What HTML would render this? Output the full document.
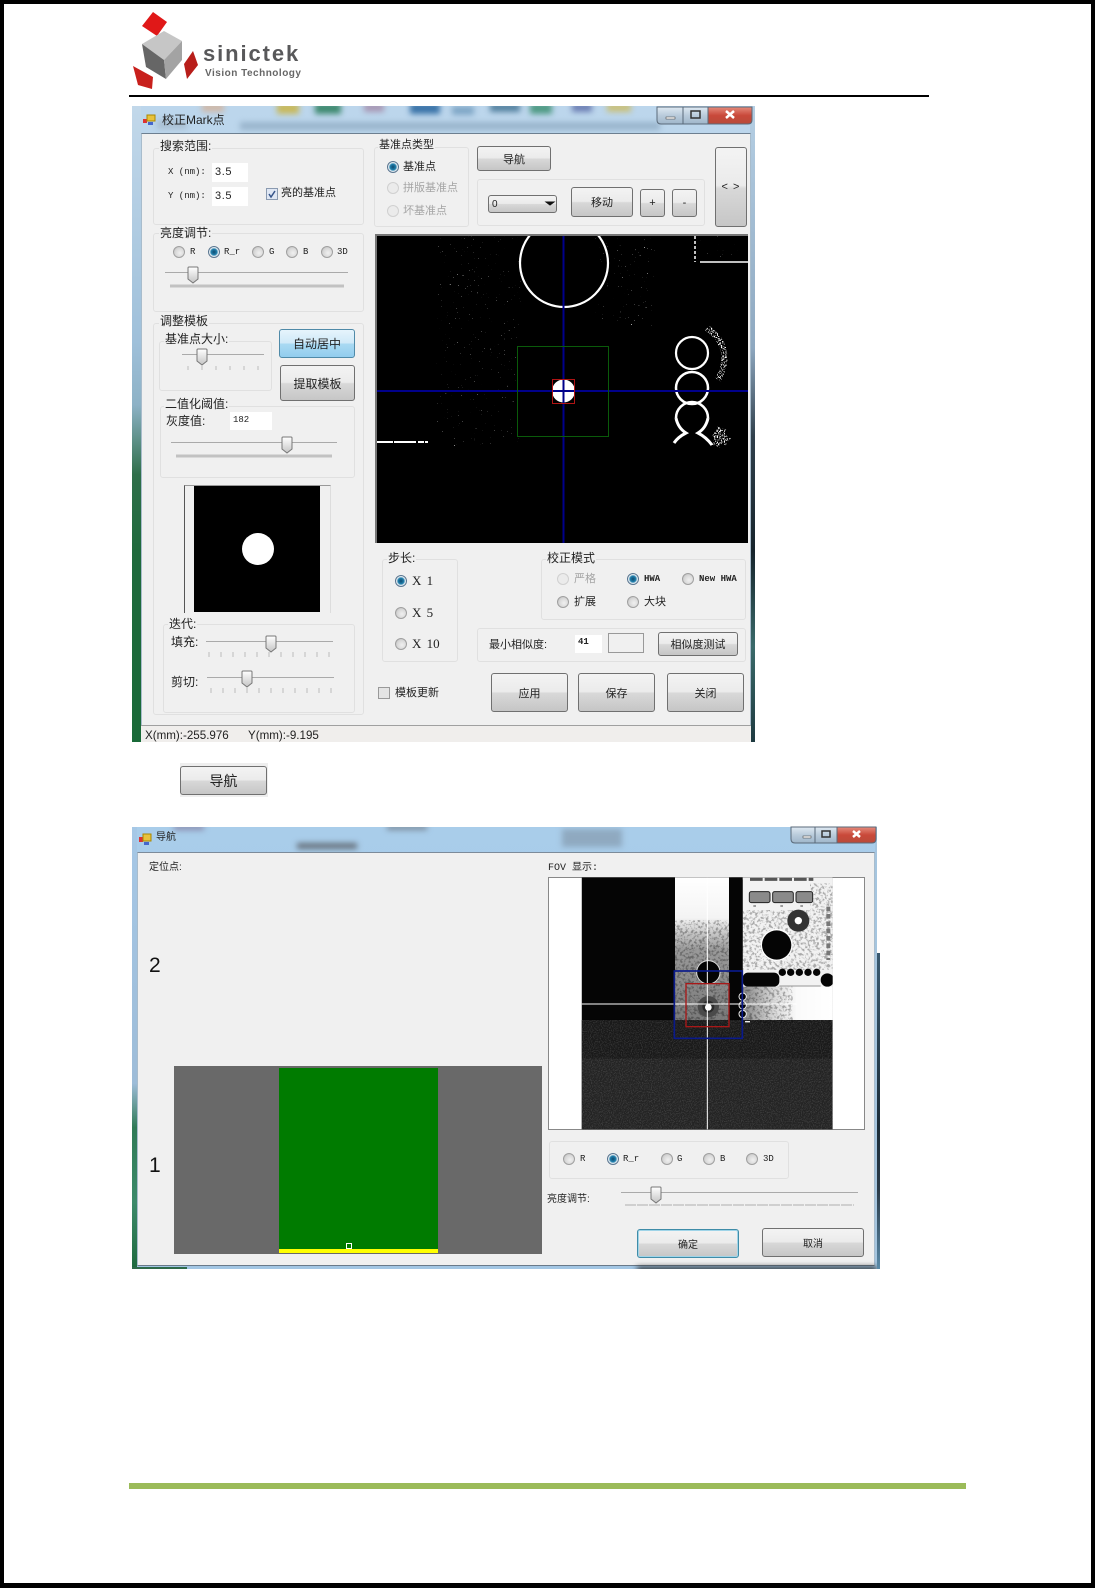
<!DOCTYPE html>
<html lang="zh"><head><meta charset="utf-8"><title>校正Mark点</title>
<style>
html,body{margin:0;padding:0;background:#fff}
#p{position:relative;width:1095px;height:1588px;overflow:hidden;background:#fff;font-family:"Liberation Sans","WenQuanYi Zen Hei","Noto Sans CJK SC",sans-serif;color:#222}
#p div,#p span{position:absolute;box-sizing:border-box}
.g{border:1px solid #e0e0e0;border-radius:3px}
.t{font-size:11px;line-height:14px;white-space:nowrap;color:#222}
.l{font-size:12px;line-height:14px;white-space:nowrap;background:#f0f0f0;padding:0 1px;color:#222}
.m{font-family:"Liberation Mono","WenQuanYi Zen Hei",monospace;font-size:9px;line-height:12px;white-space:nowrap}
.d{color:#a5a5a5}
.b{border:1px solid #707070;border-radius:3px;background:linear-gradient(#f3f3f3 0,#ebebeb 48%,#d8d8d8 52%,#c6c6c6 100%);display:flex;align-items:center;justify-content:center;font-size:11px;color:#222;white-space:nowrap}
.i{background:#fff;font-size:11px;line-height:19px;padding-left:3px;letter-spacing:.6px}
.r{width:12px;height:12px;border-radius:50%;border:1px solid #a0a0a0;background:radial-gradient(circle at 60% 60%,#f0f0f0 0,#d8d8d8 55%,#b4b4b4 100%)}
.c{border-color:#5a7690;background:radial-gradient(circle,#0e4a70 0,#2180ad 42%,#eaf0f5 62%,#d2dce6 100%)}
.x{border-color:#d0d0d0;background:#ebebeb}
.blur{filter:blur(3px)}
</style></head><body><div id="p">

<!-- window 1 frame -->
<div style="left:132px;top:106px;width:623px;height:636px;background:linear-gradient(#bcd6ec,#b5d0e6);overflow:hidden">
  <div style="left:0;top:0;width:9px;height:636px;background:linear-gradient(#c2d8ea 0,#9fc0da 37%,#8db2c6 47%,#2f6f4a 58%,#1f6a3c 70%,#196a38 100%)"></div>
  <div style="right:0;top:0;width:5px;height:636px;background:linear-gradient(#b5cfe4 0,#8ea8c0 38%,#30404c 52%,#16242c 70%,#3a6a6a 85%,#1e3a40 100%)"></div>
  <div class="blur" style="left:25px;top:14px;width:30px;height:9px;background:#a9bfd2"></div>
  <div class="blur" style="left:70px;top:-3px;width:22px;height:9px;background:#cfb8a8"></div>
  <div class="blur" style="left:145px;top:-3px;width:22px;height:11px;background:#c8b95c"></div>
  <div class="blur" style="left:183px;top:-3px;width:26px;height:11px;background:#3f8a70"></div>
  <div class="blur" style="left:232px;top:-3px;width:20px;height:9px;background:#a897b4"></div>
  <div class="blur" style="left:278px;top:-3px;width:30px;height:11px;background:#3a73a8"></div>
  <div class="blur" style="left:320px;top:0;width:22px;height:9px;background:#7fa6c6"></div>
  <div class="blur" style="left:358px;top:-3px;width:30px;height:9px;background:#5582a0"></div>
  <div class="blur" style="left:398px;top:-3px;width:22px;height:11px;background:#4f9a84"></div>
  <div class="blur" style="left:440px;top:-3px;width:20px;height:9px;background:#6d7fb4"></div>
  <div class="blur" style="left:475px;top:-3px;width:24px;height:9px;background:#c9c07a"></div>
  <div class="blur" style="left:108px;top:16px;width:420px;height:8px;background:#8ba7bf;opacity:.7"></div>
  <div style="left:9px;top:27px;width:610px;height:593px;background:#f0f0f0;border-top:1px solid #6d7f90;border-left:1px solid #a8bccc;border-right:1px solid #a8bccc"></div>
  <div style="left:9px;top:619px;width:610px;height:17px;background:#f0eeec;border-top:1px solid #a0a0a0"></div>
</div>
<div class="t" style="left:162px;top:113px;font-size:12px">校正Mark点</div>

<!-- window 1 left groups -->
<div class="g" style="left:153px;top:148px;width:211px;height:77px"></div>
<div class="l" style="left:159px;top:139px">搜索范围:</div>
<div class="m" style="left:168px;top:166px">X (nm):</div>
<div class="i" style="left:212px;top:163px;width:36px;height:19px">3.5</div>
<div class="m" style="left:168px;top:190px">Y (nm):</div>
<div class="i" style="left:212px;top:187px;width:36px;height:19px">3.5</div>
<div class="t" style="left:281px;top:186px;font-size:11px">亮的基准点</div>

<div class="g" style="left:374px;top:147px;width:95px;height:80px"></div>
<div class="l" style="left:378px;top:138px;font-size:11px">基准点类型</div>
<div class="r c" style="left:387px;top:161px"></div><div class="t" style="left:403px;top:160px">基准点</div>
<div class="r x" style="left:387px;top:182px"></div><div class="t d" style="left:403px;top:181px">拼版基准点</div>
<div class="r x" style="left:387px;top:205px"></div><div class="t d" style="left:403px;top:204px">坏基准点</div>

<div class="b" style="left:477px;top:146px;width:74px;height:25px">导航</div>
<div class="g" style="left:477px;top:179px;width:228px;height:47px"></div>
<div class="b" style="left:488px;top:195px;width:69px;height:18px;justify-content:flex-start;padding-left:3px;font-size:10px">0</div>
<div class="b" style="left:571px;top:187px;width:62px;height:30px">移动</div>
<div class="b" style="left:640px;top:189px;width:25px;height:28px">+</div>
<div class="b" style="left:672px;top:189px;width:25px;height:28px">-</div>
<div class="b" style="left:715px;top:147px;width:32px;height:80px;align-items:flex-start;padding-top:33px;font-size:11px;letter-spacing:1px">&lt; &gt;</div>

<!-- main image -->
<div style="left:375px;top:234px;width:373px;height:309px;background:#000;border-top:2px solid #777;border-left:2px solid #777"></div>

<div class="g" style="left:153px;top:233px;width:211px;height:79px"></div>
<div class="l" style="left:159px;top:226px">亮度调节:</div>
<div class="r" style="left:173px;top:246px"></div><div class="m" style="left:190px;top:246px">R</div>
<div class="r c" style="left:208px;top:246px"></div><div class="m" style="left:224px;top:246px">R_r</div>
<div class="r" style="left:252px;top:246px"></div><div class="m" style="left:269px;top:246px">G</div>
<div class="r" style="left:286px;top:246px"></div><div class="m" style="left:303px;top:246px">B</div>
<div class="r" style="left:321px;top:246px"></div><div class="m" style="left:337px;top:246px">3D</div>

<div class="g" style="left:153px;top:323px;width:211px;height:392px"></div>
<div class="l" style="left:159px;top:314px">调整模板</div>
<div class="g" style="left:159px;top:341px;width:113px;height:50px"></div>
<div class="l" style="left:164px;top:332px">基准点大小:</div>
<div class="b" style="left:279px;top:329px;width:76px;height:29px;font-size:12px;border-color:#4f8aa8;background:linear-gradient(#e6f4fc 0,#cfe9f8 48%,#a9d9f2 52%,#92cdee 100%)">自动居中</div>
<div class="b" style="left:280px;top:365px;width:75px;height:36px;font-size:12px">提取模板</div>
<div class="g" style="left:160px;top:406px;width:195px;height:72px"></div>
<div class="l" style="left:164px;top:397px">二值化阈值:</div>
<div class="l" style="left:165px;top:414px">灰度值:</div>
<div class="i" style="left:230px;top:412px;width:42px;height:18px;font-size:9px;line-height:16px;font-family:'Liberation Mono',monospace;letter-spacing:0">182</div>

<div style="left:184px;top:485px;width:147px;height:128px;background:#f0f0f0;border-top:1px solid #999;border-left:1px solid #555;border-right:1px solid #ddd"></div>
<div style="left:194px;top:486px;width:126px;height:126px;background:#000"></div>
<div style="left:242px;top:533px;width:32px;height:32px;border-radius:50%;background:#fff"></div>

<div class="g" style="left:163px;top:624px;width:192px;height:89px"></div>
<div class="l" style="left:168px;top:617px">迭代:</div>
<div class="l" style="left:170px;top:635px">填充:</div>
<div class="l" style="left:170px;top:675px">剪切:</div>

<!-- window 1 lower right -->
<div class="g" style="left:382px;top:559px;width:76px;height:103px"></div>
<div class="l" style="left:387px;top:551px">步长:</div>
<div class="r c" style="left:395px;top:575px"></div>
<div class="r" style="left:395px;top:607px"></div>
<div class="r" style="left:395px;top:638px"></div>
<div class="t" style="left:412px;top:574px;font:13px/14px 'Liberation Serif',serif;word-spacing:2px">X 1</div>
<div class="t" style="left:412px;top:606px;font:13px/14px 'Liberation Serif',serif;word-spacing:2px">X 5</div>
<div class="t" style="left:412px;top:637px;font:13px/14px 'Liberation Serif',serif;word-spacing:2px">X 10</div>

<div class="g" style="left:541px;top:559px;width:205px;height:61px"></div>
<div class="l" style="left:546px;top:551px">校正模式</div>
<div class="r x" style="left:557px;top:573px"></div><div class="t d" style="left:574px;top:572px">严格</div>
<div class="r c" style="left:627px;top:573px"></div><div class="m" style="left:644px;top:573px;font-weight:bold">HWA</div>
<div class="r" style="left:682px;top:573px"></div><div class="m" style="left:699px;top:573px;font-weight:bold">New HWA</div>
<div class="r" style="left:557px;top:596px"></div><div class="t" style="left:574px;top:595px">扩展</div>
<div class="r" style="left:627px;top:596px"></div><div class="t" style="left:644px;top:595px">大块</div>

<div class="g" style="left:477px;top:628px;width:269px;height:34px"></div>
<div class="t" style="left:489px;top:638px">最小相似度:</div>
<div class="i" style="left:575px;top:635px;width:27px;height:18px;font:bold 9px/15px 'Liberation Mono',monospace;letter-spacing:0">41</div>
<div style="left:608px;top:633px;width:36px;height:20px;border:1px solid #999"></div>
<div class="b" style="left:658px;top:632px;width:80px;height:24px">相似度测试</div>

<div style="left:378px;top:687px;width:12px;height:12px;border:1px solid #999;background:#e4e4e4"></div>
<div class="t" style="left:395px;top:686px">模板更新</div>
<div class="b" style="left:491px;top:673px;width:77px;height:39px">应用</div>
<div class="b" style="left:578px;top:673px;width:77px;height:39px">保存</div>
<div class="b" style="left:667px;top:673px;width:77px;height:39px">关闭</div>
<div class="t" style="left:145px;top:729px;font-size:11.6px">X(mm):-255.976</div>
<div class="t" style="left:248px;top:729px;font-size:11.6px">Y(mm):-9.195</div>

<div style="left:180px;top:763px;width:88px;height:34px;background:#eee"></div>
<div class="b" style="left:180px;top:766px;width:87px;height:29px;font-size:14px">导航</div>

<!-- window 2 -->
<div style="left:877px;top:953px;width:3px;height:316px;background:linear-gradient(#3a5a70 0,#1b2c38 55%,#2a3a48 75%,#5a8aa8 100%)"></div>
<div style="left:132px;top:827px;width:745px;height:442px;background:linear-gradient(#a9cdea,#a2c6e4);overflow:hidden">
  <div style="left:0;top:0;width:5px;height:442px;background:linear-gradient(#a6c8e6 0,#9dbcd8 58%,#2f7a56 68%,#3c8a6a 85%,#1e6a3e 100%)"></div>
  <div style="right:0;top:0;width:2px;height:442px;background:#a5c5df"></div>
  <div class="blur" style="left:42px;top:-2px;width:30px;height:5px;background:#88a"></div>
  <div class="blur" style="left:165px;top:16px;width:60px;height:6px;background:#67717c"></div>
  <div class="blur" style="left:255px;top:-2px;width:40px;height:5px;background:#7a8a9a"></div>
  <div class="blur" style="left:430px;top:2px;width:60px;height:18px;background:#8fa9c0"></div>
  <div style="left:5px;top:25px;width:738px;height:414px;background:#f0f0f0;border-top:1px solid #7c8b9a;border-left:1px solid #a8bccc;border-right:1px solid #a8bccc;border-bottom:1px solid #6a7a8a"></div>
  <div style="left:0;bottom:0;width:55px;height:2px;background:#2e6a4a"></div>
  <div class="blur" style="left:505px;bottom:-3px;width:240px;height:5px;background:#222"></div>
</div>
<div class="t" style="left:156px;top:831px;font-size:10px">导航</div>
<div class="t" style="left:149px;top:861px;font-size:10px">定位点:</div>
<div class="t" style="left:548px;top:862px;font:10px/14px 'Liberation Mono','WenQuanYi Zen Hei',monospace">FOV 显示:</div>
<div style="left:174px;top:1066px;width:368px;height:188px;background:#696969"></div>
<div style="left:279px;top:1068px;width:159px;height:181px;background:#007b00"></div>
<div style="left:279px;top:1249px;width:159px;height:4px;background:#ff0"></div>
<div style="left:346px;top:1243px;width:6px;height:6px;border:1px solid #fff;background:#007b00"></div>
<div style="left:149px;top:1154px;font-size:21px;line-height:24px;color:#111">1</div>
<div style="left:149px;top:954px;font-size:21px;line-height:24px;color:#111">2</div>

<div style="left:548px;top:877px;width:317px;height:253px;background:#fff;border:1px solid #888"></div>

<div class="g" style="left:549px;top:1141px;width:240px;height:38px"></div>
<div class="r" style="left:563px;top:1153px"></div><div class="m" style="left:580px;top:1153px">R</div>
<div class="r c" style="left:607px;top:1153px"></div><div class="m" style="left:623px;top:1153px">R_r</div>
<div class="r" style="left:661px;top:1153px"></div><div class="m" style="left:677px;top:1153px">G</div>
<div class="r" style="left:703px;top:1153px"></div><div class="m" style="left:720px;top:1153px">B</div>
<div class="r" style="left:746px;top:1153px"></div><div class="m" style="left:763px;top:1153px">3D</div>
<div class="t" style="left:547px;top:1193px;font-size:10px">亮度调节:</div>
<div class="b" style="left:637px;top:1229px;width:102px;height:29px;border-color:#3f8ca8;box-shadow:inset 0 0 0 1px #9fd4e8;font-size:10px">确定</div>
<div class="b" style="left:762px;top:1228px;width:102px;height:29px;font-size:10px">取消</div>

<!-- page chrome -->
<div style="left:129px;top:95px;width:800px;height:2px;background:#000"></div>
<div style="left:129px;top:1483px;width:837px;height:6px;background:#9bbb59"></div>
<div style="left:0;top:0;width:1095px;height:1588px;border:4px solid #000;border-bottom-width:5px"></div>

<div style="left:203px;top:41px;font:bold 22px/26px 'Liberation Sans',sans-serif;letter-spacing:1.9px;color:#58585a">sinictek</div>
<div style="left:205px;top:68px;font:bold 10px/12px 'Liberation Sans',sans-serif;letter-spacing:.5px;color:#666">Vision Technology</div>

<svg width="1095" height="1588" viewBox="0 0 1095 1588" style="position:absolute;left:0;top:0" xmlns="http://www.w3.org/2000/svg">
<defs>
<linearGradient id="tg" x1="0" y1="0" x2="0" y2="1"><stop offset="0" stop-color="#fff"/><stop offset="1" stop-color="#c4c4c4"/></linearGradient>
<linearGradient id="st" x1="0" y1="0" x2="0" y2="1"><stop offset="0" stop-color="#fff"/><stop offset=".28" stop-color="#f4f4f4"/><stop offset=".5" stop-color="#9a9a9a"/><stop offset="1" stop-color="#7a7a7a"/></linearGradient>
<linearGradient id="bt" x1="0" y1="0" x2="1" y2="0"><stop offset="0" stop-color="#888"/><stop offset=".35" stop-color="#d8d8d8"/><stop offset=".6" stop-color="#fafafa"/><stop offset="1" stop-color="#fff"/></linearGradient>
<linearGradient id="cl" x1="0" y1="0" x2="0" y2="1"><stop offset="0" stop-color="#e58b7c"/><stop offset=".5" stop-color="#c9493a"/><stop offset="1" stop-color="#b84a3a"/></linearGradient>
<linearGradient id="mn" x1="0" y1="0" x2="0" y2="1"><stop offset="0" stop-color="#dfe9f2"/><stop offset=".5" stop-color="#b9cbdb"/><stop offset="1" stop-color="#9fb6ca"/></linearGradient>
<symbol id="th" viewBox="-6 -1 12 18" width="12" height="18" overflow="visible"><path d="M-5 1q0-1 1-1h8q1 0 1 1v11l-5 4l-5-4z" fill="url(#tg)" stroke="#777"/></symbol>
<clipPath id="mi"><rect x="377" y="236" width="371" height="307"/></clipPath>
<clipPath id="fv"><rect x="155" y="172" width="753" height="756"/></clipPath>
<filter id="sp" x="-.1" y="-.1" width="1.2" height="1.2" color-interpolation-filters="sRGB"><feTurbulence type="fractalNoise" baseFrequency=".7" numOctaves="2" seed="4"/><feColorMatrix values="0 0 0 0 1 0 0 0 0 1 0 0 0 0 1 16 0 0 0 -12.600"/><feComposite in2="SourceGraphic" operator="in"/></filter>
<filter id="sd" x="-.2" y="-.2" width="1.4" height="1.4" color-interpolation-filters="sRGB"><feTurbulence type="fractalNoise" baseFrequency=".7" numOctaves="2" seed="9"/><feColorMatrix values="0 0 0 0 1 0 0 0 0 1 0 0 0 0 1 16 0 0 0 -8.500"/><feComposite in2="SourceGraphic" operator="in"/></filter>
<filter id="gk" x="0" y="0" width="1" height="1" color-interpolation-filters="sRGB"><feTurbulence type="fractalNoise" baseFrequency=".12" numOctaves="3" seed="7"/><feColorMatrix values="0 0 0 0 0 0 0 0 0 0 0 0 0 0 0 5 0 0 0 -2.400"/><feComposite in2="SourceGraphic" operator="in"/></filter>
<filter id="gw" x="0" y="0" width="1" height="1" color-interpolation-filters="sRGB"><feTurbulence type="fractalNoise" baseFrequency=".3" numOctaves="2" seed="12"/><feColorMatrix values="0 0 0 0 1 0 0 0 0 1 0 0 0 0 1 8 0 0 0 -4"/><feComposite in2="SourceGraphic" operator="in"/></filter>
</defs>

<!-- logo -->
<polygon points="153,12 167,22 157,36 142,26" fill="#e01818"/>
<polygon points="142,44 164,31 182,41 164,60" fill="#c6c6c6"/>
<polygon points="142,44 164,60 166,79 146,67" fill="#666"/>
<polygon points="164,60 182,41 182,60 166,79" fill="#a3a3a3"/>
<polygon points="133,66 153,77 152,89 138,85" fill="#c8201c"/>
<polygon points="193,51 198,65 187,79 184,64" fill="#b81e1a"/>

<!-- title icons -->
<rect x="143" y="119" width="4" height="4" fill="#d33"/><rect x="147" y="115" width="8" height="6" fill="#e8c23c" stroke="#a80"/><rect x="148" y="122" width="5" height="3" fill="#46c"/>
<rect x="139" y="837" width="4" height="5" fill="#d33"/><rect x="143" y="834" width="8" height="7" fill="#e8c23c" stroke="#a80"/><rect x="144" y="842" width="5" height="3" fill="#46c"/>

<!-- window 1 controls -->
<path d="M657 107v13q0 4 4 4h26v-17z" fill="url(#mn)" stroke="#5a6a7a"/><rect x="683" y="107" width="25" height="17" fill="url(#mn)" stroke="#5a6a7a"/>
<path d="M708 107v17h40q4 0 4-4v-13z" fill="url(#cl)" stroke="#5a6a7a"/>
<rect x="666" y="117" width="9" height="2" fill="#fff" stroke="#333" stroke-width=".5"/><rect x="691" y="111" width="9" height="7" fill="none" stroke="#333" stroke-width="1.500"/>
<path d="M726 111l8 7m0-7l-8 7" stroke="#fff" stroke-width="2.500"/>
<!-- window 2 controls -->
<path d="M791 827v12q0 4 4 4h20v-16z" fill="url(#mn)" stroke="#5a6a7a"/><rect x="815" y="827" width="22" height="16" fill="url(#mn)" stroke="#5a6a7a"/>
<path d="M837 827v16h35q4 0 4-4v-12z" fill="url(#cl)" stroke="#5a6a7a"/>
<rect x="803" y="836" width="8" height="2" fill="#fff" stroke="#333" stroke-width=".5"/><rect x="822" y="831" width="8" height="6" fill="none" stroke="#333" stroke-width="1.500"/>
<path d="M853 831l7 6m0-6l-7 6" stroke="#fff" stroke-width="2.500"/>

<!-- checkbox + combo arrow -->
<rect x="266.500" y="188.500" width="11" height="11" fill="#dfe7f4" stroke="#8a9ab0"/><path d="M269 194l2 3l4-6" fill="none" stroke="#35548a" stroke-width="1.500"/>
<path d="M546 202h8l-4 3z" fill="#111" stroke="#111"/>

<!-- sliders -->
<g stroke="#aaa" fill="none">
<path d="M165 272.500H348M182 354.500H264M171 442.500H337M206 641.500H333M207 677.500H334M621 1192.500H858"/>
</g>
<path d="M170 286H344M176 456H332" stroke="#c2c2c2" stroke-width="3"/>
<path d="M188 366v4m14-4v4m14-4v4m14-4v4m14-4v4m14-4v4" stroke="#bbb"/>
<path d="M209 652v5m12-5v5m12-5v5m12-5v5m12-5v5m12-5v5m12-5v5m12-5v5m12-5v5m12-5v5m12-5v5M211 688v5m12-5v5m12-5v5m12-5v5m12-5v5m12-5v5m12-5v5m12-5v5m12-5v5m12-5v5m12-5v5" stroke="#bbb"/>
<path d="M625 1205H854" stroke="#c4c4c4" stroke-width="1.500" stroke-dasharray="11 1"/>
<use href="#th" x="187" y="266"/><use href="#th" x="196" y="348"/><use href="#th" x="281" y="436"/>
<use href="#th" x="265" y="635"/><use href="#th" x="241" y="670"/><use href="#th" x="650" y="1186"/>

<!-- main image content -->
<g clip-path="url(#mi)">
<g filter="url(#sp)" fill="#fff">
<rect x="436" y="236" width="85" height="210"/>
<rect x="595" y="236" width="60" height="90"/>
<rect x="700" y="236" width="48" height="24"/>
</g>
<g stroke="#fff" fill="none">
<circle cx="564" cy="263" r="44" stroke-width="2.200"/>
<path d="M377 442H428" stroke-width="2" stroke-dasharray="16 1 22 2 6 1 4"/>
<path d="M695 236V262" stroke-width="1.500" stroke-dasharray="3 2"/><path d="M700 262H748" stroke-width="1.500"/>
<circle cx="692" cy="353" r="16" stroke-width="2.200"/><circle cx="692" cy="388" r="16" stroke-width="2.500"/>
<path d="M676 418A16 16 0 0 1 708 418" stroke-width="2.500"/>
<path d="M676 418Q678 428 686 433Q678 437 674 443M708 418Q706 428 698 433Q706 437 712 445" stroke-width="3"/>
<g filter="url(#sd)">
<path d="M707 328Q735 348 718 380" stroke-width="6"/>
<path d="M715 432L728 442M722 428L716 446" stroke-width="9"/>
</g>
</g>
<circle cx="563.500" cy="391" r="11.500" fill="#fff"/>
<path d="M563.500 234V543" stroke="#00008b" stroke-width="2"/>
<path d="M375 391H748" stroke="#00008b" stroke-width="2"/>
<rect x="517.500" y="346.500" width="91" height="90" fill="none" stroke="#0a5a0a"/>
<rect x="552.500" y="379.500" width="22" height="24" fill="none" stroke="#b01414"/>
</g>

<!-- FOV image -->
<g transform="translate(530 820) scale(.33333)">
<g clip-path="url(#fv)">
<rect x="155" y="172" width="753" height="756" fill="#050505"/>
<rect x="435" y="172" width="162" height="432" fill="url(#st)"/>
<rect x="638" y="172" width="270" height="436" fill="#f2f2f2"/>
<rect x="638" y="500" width="270" height="108" fill="url(#bt)"/>
<rect x="155" y="600" width="753" height="115" fill="#1a1a1a"/>
<rect x="155" y="715" width="753" height="213" fill="#242424"/>
<rect x="597" y="172" width="41" height="345" rx="8" fill="#050505"/>
<g filter="url(#gk)" opacity=".3">
<rect x="435" y="300" width="162" height="300" fill="#000"/>
<rect x="638" y="500" width="150" height="108" fill="#000"/>
<rect x="638" y="270" width="270" height="180" fill="#000"/>
<rect x="840" y="190" width="68" height="150" fill="#000"/>
</g>
<g filter="url(#gw)" opacity=".1"><rect x="155" y="600" width="753" height="328" fill="#fff"/></g>
<g fill="#8a8a8a" stroke="#222" stroke-width="3">
<rect x="658" y="215" width="62" height="33" rx="6"/><rect x="728" y="215" width="62" height="33" rx="6"/><rect x="798" y="215" width="50" height="33" rx="6"/>
</g>
<path d="M660 178H850" fill="none" stroke="#555" stroke-width="9" stroke-dasharray="38 6"/>
<path d="M674 257v2M755 257v2M815 257v2" stroke="#111" stroke-width="8"/>
<path d="M895 260V420" stroke="#777" stroke-width="12" stroke-dasharray="14 8"/>
<circle cx="805" cy="302" r="33" fill="#333"/><circle cx="805" cy="302" r="11" fill="#fff"/>
<circle cx="740" cy="375" r="48" fill="#fff"/><circle cx="740" cy="375" r="44" fill="#050505"/>
<rect x="638" y="458" width="110" height="42" rx="16" fill="#050505"/>
<g fill="#050505"><circle cx="757" cy="457" r="11"/><circle cx="782" cy="457" r="11"/><circle cx="808" cy="457" r="11"/><circle cx="834" cy="457" r="11"/><circle cx="860" cy="457" r="11"/><circle cx="892" cy="480" r="20"/></g>
<path d="M748 498H872" stroke="#777" stroke-width="2"/>
<circle cx="535" cy="457" r="35" fill="#050505" stroke="#ddd" stroke-width="3"/>
<circle cx="535" cy="560" r="32" fill="#4a4a4a"/><circle cx="535" cy="560" r="18" fill="#2a2a2a"/><circle cx="535" cy="562" r="10" fill="#fff"/>
<g fill="#050505" stroke="#eee" stroke-width="3"><circle cx="638" cy="530" r="11"/><circle cx="638" cy="556" r="11"/><circle cx="638" cy="582" r="11"/></g>
<path d="M645 605H660" stroke="#eee" stroke-width="4"/>
<path d="M532 172V928M155 552H800" stroke="#fff" stroke-width="3"/>
<rect x="433" y="453" width="204" height="202" fill="none" stroke="#0a1a8a" stroke-width="5"/>
<rect x="468" y="491" width="129" height="129" fill="none" stroke="#a81818" stroke-width="4"/>
</g>
</g>
</svg>
</div></body></html>
